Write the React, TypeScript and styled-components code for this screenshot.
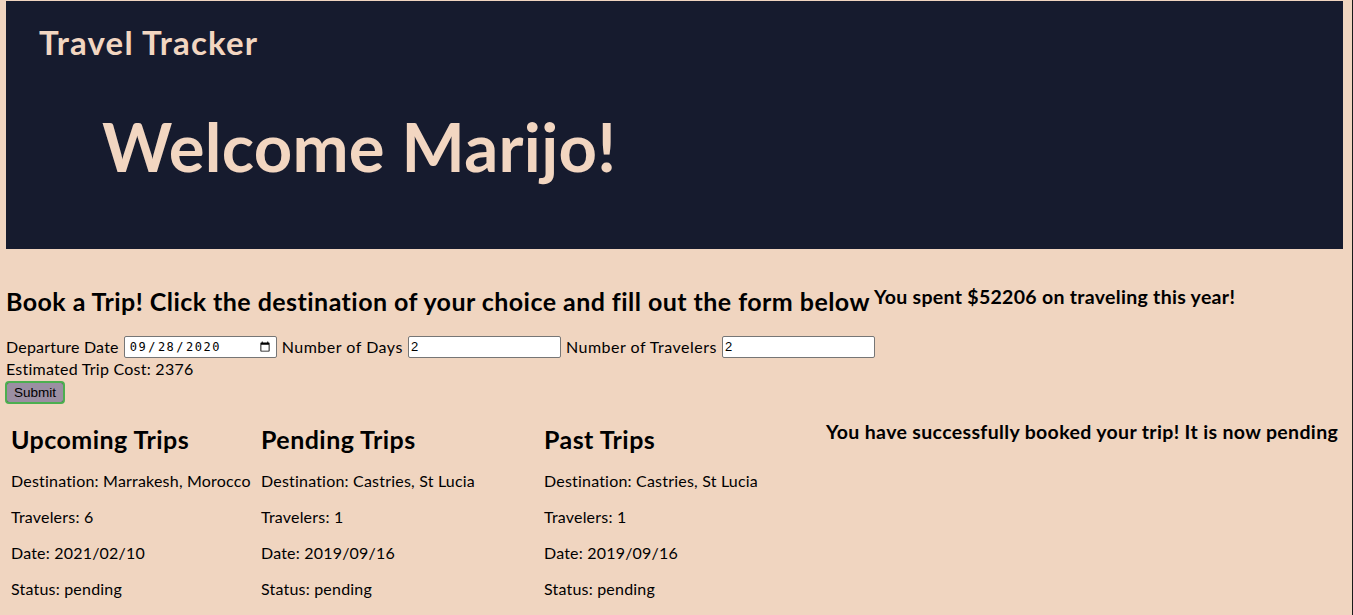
import React from "react";
import styled, { createGlobalStyle } from "styled-components";

const FONT = `"Lato", "Liberation Sans", sans-serif`;

const Global = createGlobalStyle`
  html, body { margin: 0; padding: 0; }
  body {
    background: #f0d5c0;
    font-family: ${FONT};
    color: #000;
    min-height: 100vh;
    box-shadow: inset -1px 0 0 #1a1a1a;
  }
`;

const Page = styled.div`
  padding: 1px 10px 0 6px;
`;

const Header = styled.header`
  background: #161b2e;
  height: 248px;
  padding: 21px 0 0 33px;
  box-sizing: border-box;
  display: flex;
  flex-direction: column;
`;

const Brand = styled.h1`
  margin: 0;
  color: #f2d6c1;
  font-size: 33px;
  letter-spacing: 1.2px;
  font-weight: 700;
  line-height: 40px;
`;

const Welcome = styled.h2`
  margin: 44px 0 0 63px;
  color: #f2d6c1;
  font-size: 67px;
  letter-spacing: 0.3px;
  font-weight: 700;
  line-height: 80px;
`;

const BookRow = styled.section`
  display: flex;
  align-items: flex-start;
  margin-top: 36px;
`;

const BookTitle = styled.h2`
  margin: 0;
  font-size: 25px;
  letter-spacing: 0.45px;
  font-weight: 700;
  line-height: 32px;
`;

const Spent = styled.h3`
  margin: 0 0 0 4px;
  font-size: 19.5px;
  letter-spacing: 0.3px;
  font-weight: 700;
  line-height: 24px;
`;

const Form = styled.form`
  margin-top: 18px;
  font-size: 16px;
  letter-spacing: 0.25px;
  line-height: 22px;
`;

const FieldRow = styled.div`
  display: flex;
  align-items: center;
  gap: 5px;
  height: 23px;
`;

const Label = styled.label<{ $wide?: boolean }>`
  font-size: 16px;
  letter-spacing: ${(p) => (p.$wide ? "0.5px" : "0.2px")};
`;

const Input = styled.input`
  width: 153px;
  height: 22px;
  box-sizing: border-box;
  border: 1px solid #767676;
  border-radius: 2px;
  background: #fff;
  font-family: "Liberation Sans", sans-serif;
  font-size: 13px;
  letter-spacing: 0;
  padding: 1px 2px;
  margin: 0;
`;

const DateInput = styled(Input)`
  font-family: "DejaVu Sans Mono", monospace;
  font-size: 12px;
  letter-spacing: 1.5px;
  padding: 1px 3px 1px 4px;
`;

const Cost = styled.div`
  font-size: 16px;
  line-height: 22px;
`;

const SubmitButton = styled.button`
  font-family: "Liberation Sans", sans-serif;
  font-size: 13.5px;
  background: #9b8fa3;
  color: #000;
  border: 1px solid #3b3b3b;
  border-radius: 3px;
  outline: 2px solid #4caf50;
  outline-offset: -1px;
  padding: 2px 7px;
  height: 21px;
  line-height: 15px;
  margin: 0;
`;

const Trips = styled.section`
  display: grid;
  grid-template-columns: 250px 283px 282px 1fr;
  padding-left: 5px;
  margin-top: 20px;
`;

const Column = styled.div`
  display: flex;
  flex-direction: column;
`;

const ColTitle = styled.h2`
  margin: 0 0 16px;
  font-size: 25px;
  letter-spacing: 0.45px;
  font-weight: 700;
  line-height: 32px;
`;

const Line = styled.p`
  margin: 0 0 16px;
  font-size: 16px;
  letter-spacing: 0.2px;
  line-height: 20px;
`;

const Message = styled.h3`
  margin: 0;
  font-size: 19.5px;
  letter-spacing: 0.35px;
  font-weight: 700;
  line-height: 18px;
`;

type Trip = { title: string; dest: string; travelers: number; date: string; status: string };

const trips: Trip[] = [
  { title: "Upcoming Trips", dest: "Marrakesh, Morocco", travelers: 6, date: "2021/02/10", status: "pending" },
  { title: "Pending Trips", dest: "Castries, St Lucia", travelers: 1, date: "2019/09/16", status: "pending" },
  { title: "Past Trips", dest: "Castries, St Lucia", travelers: 1, date: "2019/09/16", status: "pending" },
];

export default function App() {
  return (
    <Page>
      <Global />
      <Header>
        <Brand>Travel Tracker</Brand>
        <Welcome>Welcome Marijo!</Welcome>
      </Header>
      <BookRow>
        <BookTitle>Book a Trip! Click the destination of your choice and fill out the form below</BookTitle>
        <Spent>You spent $52206 on traveling this year!</Spent>
      </BookRow>
      <Form onSubmit={(e) => e.preventDefault()}>
        <FieldRow>
          <Label>Departure Date</Label>
          <DateInput type="date" defaultValue="2020-09-28" />
          <Label $wide>Number of Days</Label>
          <Input type="text" defaultValue="2" />
          <Label $wide>Number of Travelers</Label>
          <Input type="text" defaultValue="2" />
        </FieldRow>
        <Cost>Estimated Trip Cost: 2376</Cost>
        <SubmitButton type="submit">Submit</SubmitButton>
      </Form>
      <Trips>
        {trips.map((t) => (
          <Column key={t.title}>
            <ColTitle>{t.title}</ColTitle>
            <Line>Destination: {t.dest}</Line>
            <Line>Travelers: {t.travelers}</Line>
            <Line>Date: {t.date}</Line>
            <Line>Status: {t.status}</Line>
          </Column>
        ))}
        <Column>
          <Message>You have successfully booked your trip! It is now pending</Message>
        </Column>
      </Trips>
    </Page>
  );
}
